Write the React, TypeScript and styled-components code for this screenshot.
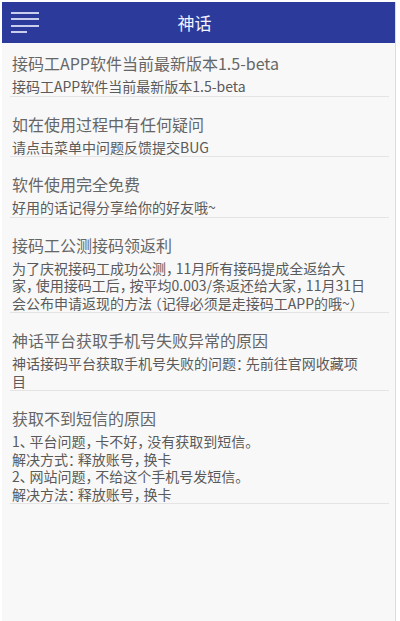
import React from "react";
import styled, { createGlobalStyle } from "styled-components";

const Global = createGlobalStyle`
  html, body { margin: 0; padding: 0; background: #ffffff; }
  body { font-family: "Noto Sans CJK SC", "Noto Sans", sans-serif; }
`;

const Outer = styled.div`
  width: 400px;
  height: 621px;
  box-sizing: border-box;
  padding: 2px 4px 0 2px;
  background: #ffffff;
  overflow: hidden;
`;

const Frame = styled.div`
  height: 100%;
  background: #f8f8f8;
  border-right: 1px solid #dcdcdc;
  display: flex;
  flex-direction: column;
`;

const Header = styled.header`
  height: 41px;
  flex: none;
  background: #2c3b9b;
  display: grid;
  grid-template-columns: 48px 1fr 48px;
  align-items: center;
`;

const MenuButton = styled.div`
  display: flex;
  flex-direction: column;
  gap: 4.6px;
  padding-left: 9px;
`;

const MenuLine = styled.span<{ $short?: boolean }>`
  display: block;
  height: 2px;
  width: ${(p) => (p.$short ? "16px" : "28px")};
  background: #c9cdee;
`;

const Title = styled.h1`
  margin: 0;
  text-align: center;
  color: #f2f3fb;
  font-size: 17px;
  font-weight: 400;
  padding-right: 8px;
`;

const List = styled.div`
  display: flex;
  flex-direction: column;
  padding: 0 6px 0 8px;
`;

const Item = styled.div<{ $first?: boolean }>`
  padding: ${(p) => (p.$first ? "9px" : "16px")} 2px 0 2px;
  border-bottom: 1px solid #e4e4e4;
  display: flex;
  flex-direction: column;
  gap: 4px;
`;

const ItemTitle = styled.div`
  font-size: 16px;
  line-height: 22px;
  color: #666666;
`;

const ItemBody = styled.div`
  font-size: 14px;
  line-height: 17.5px;
  color: #5a5a5a;
  white-space: pre;
  font-feature-settings: "halt";
`;

const TS = "\u2009";

function spaced(s: string) {
  return s
    .replace(/([，：、。）])/g, `$1${TS}`)
    .replace(/（/g, `${TS}（`);
}

const items = [
  {
    t: "接码工APP软件当前最新版本1.5-beta",
    b: "接码工APP软件当前最新版本1.5-beta",
  },
  { t: "如在使用过程中有任何疑问", b: "请点击菜单中问题反馈提交BUG" },
  { t: "软件使用完全免费", b: "好用的话记得分享给你的好友哦~" },
  {
    t: "接码工公测接码领返利",
    b: "为了庆祝接码工成功公测，11月所有接码提成全返给大\n家，使用接码工后，按平均0.003/条返还给大家，11月31日\n会公布申请返现的方法（记得必须是走接码工APP的哦~）",
  },
  {
    t: "神话平台获取手机号失败异常的原因",
    b: "神话接码平台获取手机号失败的问题：先前往官网收藏项\n目",
  },
  {
    t: "获取不到短信的原因",
    b: "1、平台问题，卡不好，没有获取到短信。\n解决方式：释放账号，换卡\n2、网站问题，不给这个手机号发短信。\n解决方法：释放账号，换卡",
  },
];

export default function App() {
  return (
    <>
      <Global />
      <Outer>
        <Frame>
          <Header>
            <MenuButton>
              <MenuLine />
              <MenuLine />
              <MenuLine />
              <MenuLine $short />
            </MenuButton>
            <Title>神话</Title>
            <span />
          </Header>
          <List>
            {items.map((it, i) => (
              <Item key={i} $first={i === 0}>
                <ItemTitle>{it.t}</ItemTitle>
                <ItemBody>{spaced(it.b)}</ItemBody>
              </Item>
            ))}
          </List>
        </Frame>
      </Outer>
    </>
  );
}
